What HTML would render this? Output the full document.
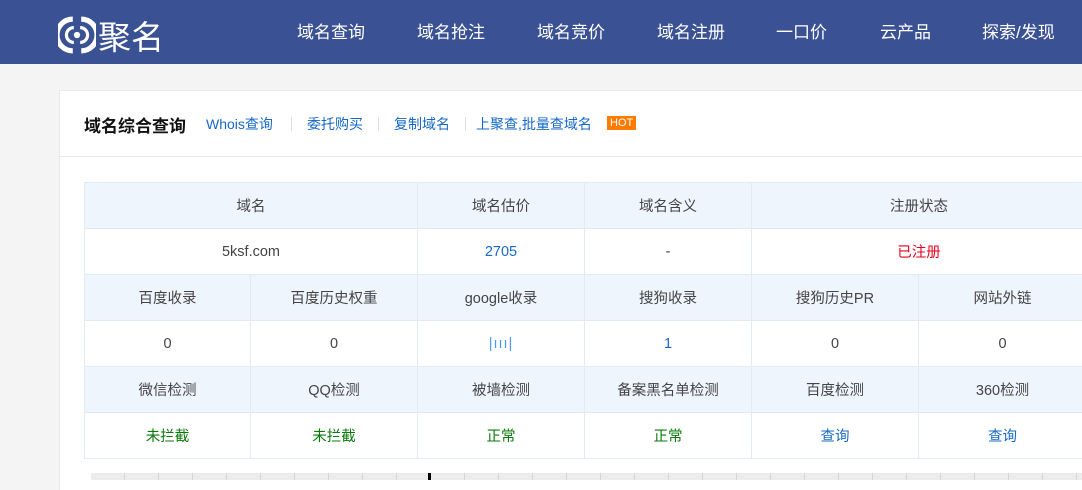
<!DOCTYPE html>
<html><head><meta charset="utf-8"><style>
*{margin:0;padding:0;box-sizing:border-box}
body{width:1082px;height:480px;overflow:hidden;background:#f4f4f4;font-family:"Liberation Sans","Noto Sans CJK SC",sans-serif;position:relative}
.hd{position:absolute;left:0;top:0;width:1082px;height:64px;background:#3a5294}
.logo{position:absolute;left:58px;top:11px;color:#fff;font-size:33px;font-weight:normal;display:flex;align-items:center}
.nav a{position:absolute;top:18px;color:#fff;font-size:17px;white-space:nowrap}
.card{position:absolute;left:59px;top:90px;width:1040px;height:400px;background:#fff;border-top:1px solid #e8e8e8;border-left:1px solid #e8e8e8}
.ch{position:absolute;left:0;top:0;right:0;height:66px;border-bottom:1px solid #e8e8e8}
.ch b{position:absolute;left:24px;top:21px;font-size:17px;color:#111}
.ch a{position:absolute;top:23px;font-size:14px;color:#1668c8;white-space:nowrap}
.sep{position:absolute;top:26px;width:1px;height:14px;background:#ddd}
.hot{position:absolute;left:547px;top:25px;background:#ff7a00;color:#fff;font-size:11px;padding:0 3px;line-height:14px}
table{position:absolute;left:84px;top:182px;border-collapse:collapse;table-layout:fixed;width:1002px}
td{border:1px solid #e2ebf4;height:46px;text-align:center;font-size:14.5px;color:#444}
tr.g td{background:#eff5fc}
.b{color:#1668c8}.r{color:#e8001c}.gr{color:#0a7a0a}
.strip{position:absolute;left:91px;top:473px;width:991px;height:7px;background:repeating-linear-gradient(90deg,#ececec 0 33px,#d6d6d6 33px 34px)}
</style></head><body>
<div class="hd">
<div class="logo"><svg width="38" height="38" viewBox="0 0 36 36"><path d="M14 3A15 15 0 0 0 14 33" stroke="#fff" stroke-width="5" fill="none"/><path d="M22 3A15 15 0 0 1 22 33" stroke="#fff" stroke-width="5" fill="none"/><path d="M15 11A7 7 0 0 0 15 25M21 11A7 7 0 0 1 21 25" stroke="#fff" stroke-width="3" fill="none"/><circle cx="18" cy="18" r="3" fill="#fff"/></svg><span style="margin-left:2px">聚名</span></div>
<div class="nav"><a style="left:297px">域名查询</a><a style="left:417px">域名抢注</a><a style="left:537px">域名竞价</a><a style="left:657px">域名注册</a><a style="left:776px">一口价</a><a style="left:880px">云产品</a><a style="left:982px">探索/发现</a></div>
</div>
<div class="card"><div class="ch"><b>域名综合查询</b>
<a style="left:146px">Whois查询</a><div class="sep" style="left:231px"></div>
<a style="left:247px">委托购买</a><div class="sep" style="left:318px"></div>
<a style="left:334px">复制域名</a><div class="sep" style="left:405px"></div>
<a style="left:416px">上聚查,批量查域名</a><span class="hot">HOT</span></div></div>
<table>
<colgroup><col style="width:166px"><col style="width:167px"><col style="width:167px"><col style="width:167px"><col style="width:167px"><col style="width:168px"></colgroup>
<tr class="g"><td colspan="2">域名</td><td>域名估价</td><td>域名含义</td><td colspan="2">注册状态</td></tr>
<tr><td colspan="2">5ksf.com</td><td class="b">2705</td><td>-</td><td colspan="2" class="r">已注册</td></tr>
<tr class="g"><td>百度收录</td><td>百度历史权重</td><td>google收录</td><td>搜狗收录</td><td>搜狗历史PR</td><td>网站外链</td></tr>
<tr><td>0</td><td>0</td><td class="b" style="color:#4a9af0;letter-spacing:1px">|ııı|</td><td class="b">1</td><td>0</td><td>0</td></tr>
<tr class="g"><td>微信检测</td><td>QQ检测</td><td>被墙检测</td><td>备案黑名单检测</td><td>百度检测</td><td>360检测</td></tr>
<tr><td class="gr">未拦截</td><td class="gr">未拦截</td><td class="gr">正常</td><td class="gr">正常</td><td class="b">查询</td><td class="b">查询</td></tr>
</table>
<div class="strip"></div>
<div style="position:absolute;left:428px;top:473px;width:3px;height:7px;background:#000"></div>
</body></html>
